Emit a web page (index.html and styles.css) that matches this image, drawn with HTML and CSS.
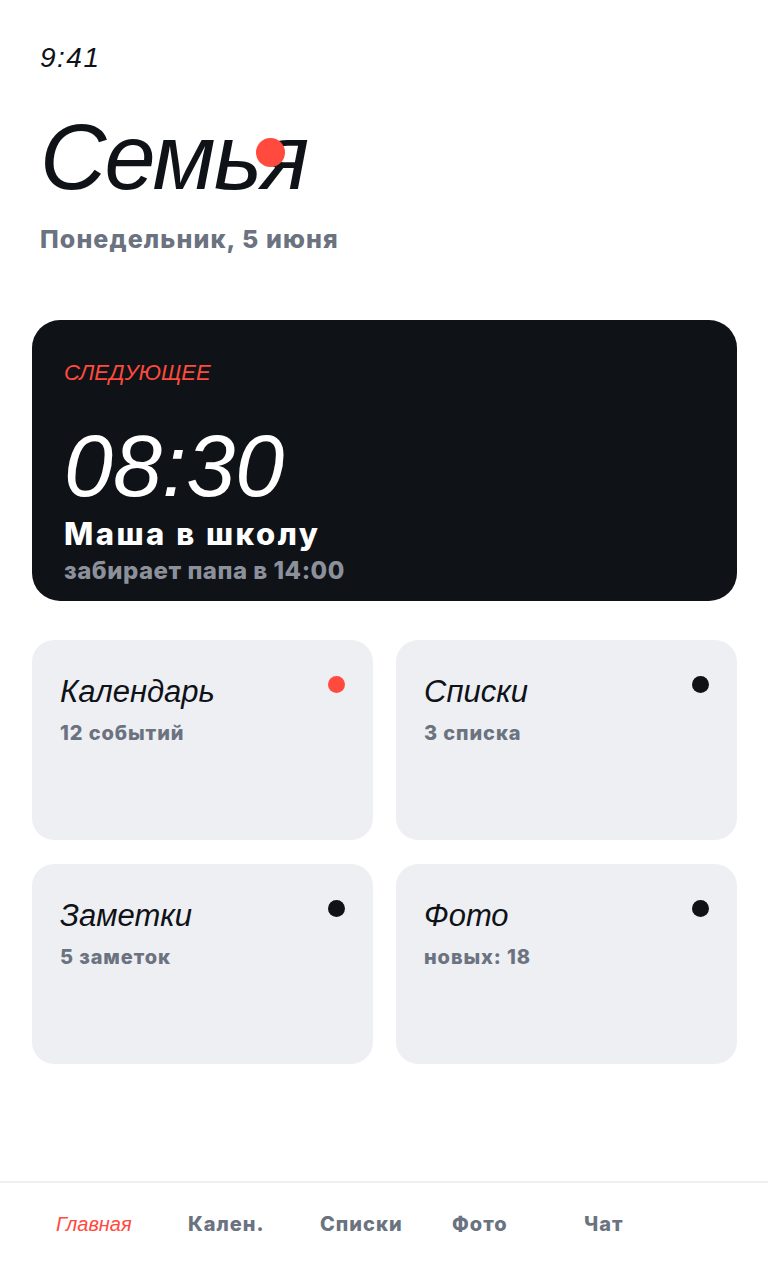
FILE: index.html
```html
<html>

<head>
  <title>Семья</title>
  <meta charset="utf-8">
  <link rel="stylesheet" href="styles.css">
</head>

<body>
  <div class="screen">
    <div class="status">9:41</div>

    <header class="head">
      <h1 class="title">Семья<span class="title-dot"></span></h1>
      <div class="date">Понедельник, 5 июня</div>
    </header>

    <div class="next">
      <div class="next-label">СЛЕДУЮЩЕЕ</div>
      <div class="next-time">08:30</div>
      <div class="next-title">Маша в школу</div>
      <div class="next-sub">забирает папа в 14:00</div>
    </div>

    <div class="tiles">
      <div class="tile">
        <span class="tile-dot red"></span>
        <div class="tile-title">Календарь</div>
        <div class="tile-sub">12 событий</div>
      </div>
      <div class="tile">
        <span class="tile-dot"></span>
        <div class="tile-title">Списки</div>
        <div class="tile-sub">3 списка</div>
      </div>
      <div class="tile">
        <span class="tile-dot"></span>
        <div class="tile-title">Заметки</div>
        <div class="tile-sub">5 заметок</div>
      </div>
      <div class="tile">
        <span class="tile-dot"></span>
        <div class="tile-title">Фото</div>
        <div class="tile-sub">новых: 18</div>
      </div>
    </div>

    <nav class="tabbar">
      <div class="tab active">Главная</div>
      <div class="tab">Кален.</div>
      <div class="tab">Списки</div>
      <div class="tab">Фото</div>
      <div class="tab">Чат</div>
    </nav>
  </div>
</body>

</html>
```

FILE: styles.css
```css
body {
  margin: 0;
  background: #ffffff;
  font-family: "Liberation Sans", Arial, sans-serif;
  color: #0f1217;
}

.screen {
  height: 1280px;
  display: flex;
  flex-direction: column;
  padding: 0 31px 0 32px;
  box-sizing: border-box;
}

/* heavy labels */
.date,
.next-title,
.next-sub,
.tile-sub,
.tab {
  font-family: Inter, "Liberation Sans", sans-serif;
  font-weight: 800;
}

.status {
  margin-top: 42px;
  padding-left: 8px;
  font-size: 28px;
  line-height: 32px;
  font-style: italic;
  letter-spacing: 1.5px;
}

.head {
  padding-left: 8px;
}

.title {
  position: relative;
  display: inline-block;
  margin: 37px 0 0 0;
  font-size: 92px;
  line-height: 92px;
  font-weight: normal;
  font-style: italic;
  letter-spacing: -2px;
}

.title-dot {
  position: absolute;
  left: 216px;
  top: 27px;
  width: 29px;
  height: 29px;
  border-radius: 50%;
  background: #ff4a3d;
}

.date {
  margin-top: 22px;
  font-size: 25px;
  line-height: 28px;
  letter-spacing: 1.1px;
  color: #6b7280;
}

.next {
  margin-top: 67px;
  padding: 40px 32px 16px 32px;
  background: #0f1217;
  border-radius: 28px;
  color: #ffffff;
}

.next-label {
  font-size: 22px;
  line-height: 26px;
  font-style: italic;
  color: #ff4a3d;
}

.next-time {
  margin-top: 36px;
  font-size: 88px;
  line-height: 88px;
  font-style: italic;
}

.next-title {
  margin-top: 6px;
  font-size: 31px;
  line-height: 36px;
  letter-spacing: 2.5px;
}

.next-sub {
  margin-top: 5px;
  font-size: 24px;
  line-height: 28px;
  letter-spacing: 0.5px;
  color: #8b909a;
}

.tiles {
  margin-top: 39px;
  display: grid;
  grid-template-columns: 1fr 1fr;
  grid-auto-rows: 200px;
  gap: 24px 23px;
}

.tile {
  position: relative;
  padding: 34px 28px 0 28px;
  background: #eeeff3;
  border-radius: 22px;
}

.tile-dot {
  position: absolute;
  top: 36px;
  right: 28px;
  width: 17px;
  height: 17px;
  border-radius: 50%;
  background: #0f1217;
}

.tile-dot.red {
  background: #ff4a3d;
}

.tile-title {
  font-size: 31px;
  line-height: 36px;
  font-style: italic;
}

.tile-sub {
  margin-top: 11px;
  font-size: 20px;
  line-height: 24px;
  letter-spacing: 0.9px;
  color: #6b7280;
}

.tabbar {
  margin: auto -31px 0 -32px;
  height: 99px;
  border-top: 2px solid #eeeff3;
  box-sizing: border-box;
  padding: 29px 0 0 56px;
  display: grid;
  grid-template-columns: repeat(5, 132px);
  align-items: start;
}

.tab {
  font-size: 20px;
  line-height: 24px;
  letter-spacing: 1px;
  color: #6b7280;
}

.tab.active {
  font-family: "Liberation Sans", Arial, sans-serif;
  font-weight: normal;
  font-style: italic;
  letter-spacing: 0;
  color: #ff4a3d;
}
```
